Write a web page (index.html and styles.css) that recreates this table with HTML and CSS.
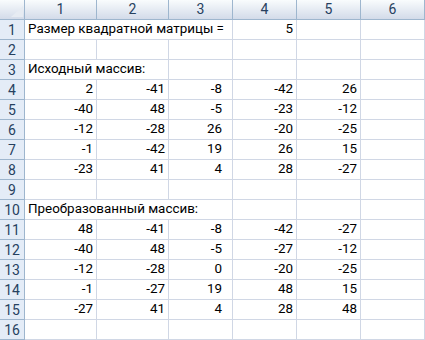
FILE: index.html
```html
<!DOCTYPE html>
<html lang="ru">
<head>
<meta charset="utf-8">
<link rel="stylesheet" href="styles.css">
</head>
<body>
<div class="sheet">
  <div class="corner"></div>
  <div class="ch">1</div><div class="ch">2</div><div class="ch">3</div><div class="ch">4</div><div class="ch">5</div><div class="ch">6</div>

  <div class="rh">1</div><div class="c t span3">Размер квадратной матрицы =</div><div class="c n">5</div><div class="c"></div><div class="c"></div>
  <div class="rh">2</div><div class="c"></div><div class="c"></div><div class="c"></div><div class="c"></div><div class="c"></div><div class="c"></div>
  <div class="rh">3</div><div class="c t span2">Исходный массив:</div><div class="c"></div><div class="c"></div><div class="c"></div><div class="c"></div>
  <div class="rh">4</div><div class="c n">2</div><div class="c n">-41</div><div class="c n c3">-8</div><div class="c n">-42</div><div class="c n">26</div><div class="c"></div>
  <div class="rh">5</div><div class="c n">-40</div><div class="c n">48</div><div class="c n c3">-5</div><div class="c n">-23</div><div class="c n">-12</div><div class="c"></div>
  <div class="rh">6</div><div class="c n">-12</div><div class="c n">-28</div><div class="c n c3">26</div><div class="c n">-20</div><div class="c n">-25</div><div class="c"></div>
  <div class="rh">7</div><div class="c n">-1</div><div class="c n">-42</div><div class="c n c3">19</div><div class="c n">26</div><div class="c n">15</div><div class="c"></div>
  <div class="rh">8</div><div class="c n">-23</div><div class="c n">41</div><div class="c n c3">4</div><div class="c n">28</div><div class="c n">-27</div><div class="c"></div>
  <div class="rh">9</div><div class="c"></div><div class="c"></div><div class="c"></div><div class="c"></div><div class="c"></div><div class="c"></div>
  <div class="rh">10</div><div class="c t span3">Преобразованный массив:</div><div class="c"></div><div class="c"></div><div class="c"></div>
  <div class="rh">11</div><div class="c n">48</div><div class="c n">-41</div><div class="c n c3">-8</div><div class="c n">-42</div><div class="c n">-27</div><div class="c"></div>
  <div class="rh">12</div><div class="c n">-40</div><div class="c n">48</div><div class="c n c3">-5</div><div class="c n">-27</div><div class="c n">-12</div><div class="c"></div>
  <div class="rh">13</div><div class="c n">-12</div><div class="c n">-28</div><div class="c n c3">0</div><div class="c n">-20</div><div class="c n">-25</div><div class="c"></div>
  <div class="rh">14</div><div class="c n">-1</div><div class="c n">-27</div><div class="c n c3">19</div><div class="c n">48</div><div class="c n">15</div><div class="c"></div>
  <div class="rh">15</div><div class="c n">-27</div><div class="c n">41</div><div class="c n c3">4</div><div class="c n">28</div><div class="c n">48</div><div class="c"></div>
  <div class="rh">16</div><div class="c"></div><div class="c"></div><div class="c"></div><div class="c"></div><div class="c"></div><div class="c"></div>
</div>
</body>
</html>
```

FILE: styles.css
```css
html, body {
  margin: 0;
  padding: 0;
  background: #ffffff;
}

.sheet {
  display: grid;
  grid-template-columns: 25px 72px 72px 64px 64px 64px 64px;
  grid-auto-rows: 20px;
  width: 425px;
  font-family: Roboto, "Open Sans", sans-serif;
  font-size: 13.4px;
  color: #000;
}

.corner {
  position: relative;
  background: linear-gradient(#f9fcfd, #d3dbe9);
  border-right: 1px solid #9eb6ce;
  border-bottom: 1px solid #9eb6ce;
}

.corner::after {
  content: "";
  position: absolute;
  right: 1px;
  bottom: 2px;
  width: 12px;
  height: 11px;
  background: #e6ebf2;
  clip-path: polygon(100% 0, 100% 100%, 0 100%);
}

.ch {
  background: linear-gradient(#f9fcfd, #d3dbe9);
  border-right: 1px solid #9eb6ce;
  border-bottom: 1px solid #9eb6ce;
  color: #27415f;
  text-align: center;
  font-size: 14px;
  line-height: 19px;
}

.rh {
  background: #e4ecf7;
  border-right: 1px solid #9eb6ce;
  border-bottom: 1px solid #9eb6ce;
  color: #27415f;
  text-align: center;
  font-size: 14px;
  line-height: 20px;
}

.c {
  border-right: 1px solid #d0d7e5;
  border-bottom: 1px solid #d0d7e5;
  display: flex;
  align-items: flex-end;
  white-space: nowrap;
  line-height: 18px;
  padding: 0 3px 1px 3px;
}

.n {
  justify-content: flex-end;
}

.c3 {
  padding-right: 10px;
}

.span2 {
  grid-column: span 2;
}

.span3 {
  grid-column: span 3;
}
```
